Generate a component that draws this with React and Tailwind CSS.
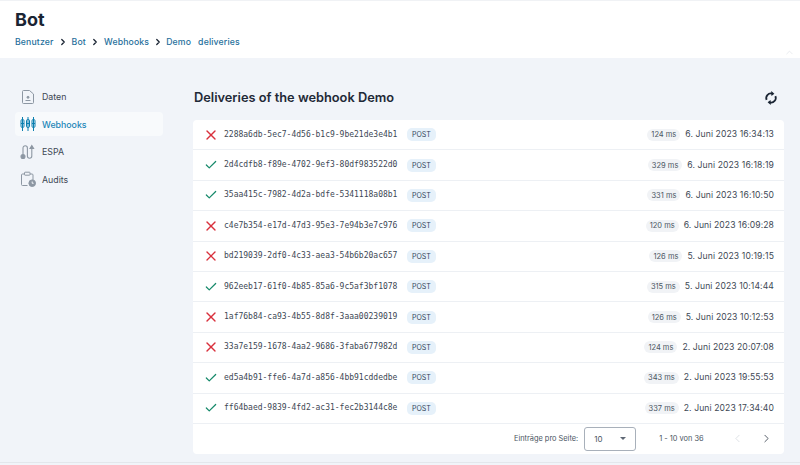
import { Check, ChevronLeft, ChevronRight, ChevronUp, X } from 'lucide-react'

const DELIVERIES = [
  { id: '2288a6db-5ec7-4d56-b1c9-9be21de3e4b1', ok: false, ms: 124, date: '6. Juni 2023 16:34:13' },
  { id: '2d4cdfb8-f89e-4702-9ef3-80df983522d0', ok: true, ms: 329, date: '6. Juni 2023 16:18:19' },
  { id: '35aa415c-7982-4d2a-bdfe-5341118a08b1', ok: true, ms: 331, date: '6. Juni 2023 16:10:50' },
  { id: 'c4e7b354-e17d-47d3-95e3-7e94b3e7c976', ok: false, ms: 120, date: '6. Juni 2023 16:09:28' },
  { id: 'bd219039-2df0-4c33-aea3-54b6b20ac657', ok: false, ms: 126, date: '5. Juni 2023 10:19:15' },
  { id: '962eeb17-61f0-4b85-85a6-9c5af3bf1078', ok: true, ms: 315, date: '5. Juni 2023 10:14:44' },
  { id: '1af76b84-ca93-4b55-8d8f-3aaa00239019', ok: false, ms: 126, date: '5. Juni 2023 10:12:53' },
  { id: '33a7e159-1678-4aa2-9686-3faba677982d', ok: false, ms: 124, date: '2. Juni 2023 20:07:08' },
  { id: 'ed5a4b91-ffe6-4a7d-a856-4bb91cddedbe', ok: true, ms: 343, date: '2. Juni 2023 19:55:53' },
  { id: 'ff64baed-9839-4fd2-ac31-fec2b3144c8e', ok: true, ms: 337, date: '2. Juni 2023 17:34:40' },
]

function DatenIcon() {
  return (
    <svg width="16" height="16" viewBox="0 0 16 16" fill="none" stroke="#8d97a3" strokeWidth="1">
      <path d="M2.5 2.5a1 1 0 0 1 1-1h6L13.5 5v8.5a1 1 0 0 1-1 1h-9a1 1 0 0 1-1-1z" />
      <circle cx="8" cy="8.3" r="1" fill="#8d97a3" />
      <path d="M5.5 11.5h5" />
    </svg>
  )
}

function WebhooksIcon() {
  return (
    <svg width="16" height="16" viewBox="0 0 16 16" fill="none" stroke="#0b7fb0" strokeWidth="1">
      <path d="M2.5 1v14M8 1v14M13.5 1v14" />
      <rect x="1" y="3.5" width="3" height="8" rx="1.3" />
      <rect x="6.5" y="3.5" width="3" height="8" rx="1.3" />
      <rect x="12" y="3.5" width="3" height="8" rx="1.3" />
      <path d="M1 7.5h3M6.5 7.5h3M12 7.5h3" />
    </svg>
  )
}

function EspaIcon() {
  return (
    <svg width="16" height="16" viewBox="0 0 16 16" fill="none" stroke="#8d97a3" strokeWidth="1.1">
      <path d="M3 10V4a2.2 2.2 0 0 1 4.4 0v8a2.2 2.2 0 0 0 4.4 0V3" />
      <path d="M10 4.5 11.8 1.5l1.8 3z" fill="#8d97a3" />
      <circle cx="3" cy="12.5" r="2" fill="#8d97a3" />
    </svg>
  )
}

function AuditsIcon() {
  return (
    <svg width="16" height="16" viewBox="0 0 16 16" fill="none" stroke="#8d97a3" strokeWidth="1">
      <path d="M7.5 14.5h-5a1 1 0 0 1-1-1V4a1 1 0 0 1 1-1h9.5a1 1 0 0 1 1 1v5" />
      <rect x="4.5" y="1.2" width="5.5" height="3" rx="0.6" fill="#f1f4f9" />
      <circle cx="12.2" cy="12.2" r="3.3" fill="#8d97a3" />
      <path d="M12.2 10.5v1.8h1.4" stroke="#f1f4f9" />
    </svg>
  )
}

const NAV = [
  { label: 'Daten', Icon: DatenIcon },
  { label: 'Webhooks', Icon: WebhooksIcon, active: true },
  { label: 'ESPA', Icon: EspaIcon },
  { label: 'Audits', Icon: AuditsIcon },
]

function RefreshIcon() {
  return (
    <svg width="14" height="14" viewBox="0 0 14 14" fill="none" stroke="#1a2433" strokeWidth="1.8">
      <path d="M2.6 8.8A4.6 4.6 0 0 1 8 2.6" />
      <path d="M11.4 5.2A4.6 4.6 0 0 1 6 11.4" />
      <path d="M7.2 0 10.4 2.7 7.4 5z" fill="#1a2433" stroke="none" />
      <path d="M6.8 14 3.6 11.3 6.6 9z" fill="#1a2433" stroke="none" />
    </svg>
  )
}

function Row({ item }) {
  return (
    <div className="flex h-[30.4px] shrink-0 items-center border-b border-[#edf0f4] pr-[10px] pl-[4px]">
      <span className="flex w-[27px] shrink-0 justify-center">
        {item.ok ? (
          <Check size={14} strokeWidth={2.1} className="text-[#16896a]" />
        ) : (
          <X size={16} strokeWidth={2} className="text-[#d9303c]" />
        )}
      </span>
      <span className="w-[172px] font-['DejaVu_Sans_Mono'] text-[8px] whitespace-nowrap text-[#3d4754]">{item.id}</span>
      <span className="ml-[11px] rounded-[5px] bg-[#e6f1fa] px-[5px] py-[1px] text-[7px] leading-[11px] text-[#34465a]">
        POST
      </span>
      <span className="ml-auto rounded-[6px] bg-[#f1f3f6] px-[4px] py-[0.5px] text-[7.5px] leading-[11px] text-[#4a5562]">
        {item.ms} ms
      </span>
      <span className="ml-[5px] text-[8.6px] tracking-[0.1px] text-[#3d4754]">{item.date}</span>
    </div>
  )
}

export default function App() {
  return (
    <div className="flex h-[465px] w-[800px] flex-col overflow-hidden bg-[#f1f4f9] font-['Inter',sans-serif]">
      <header className="relative h-[58px] shrink-0 border-t border-[#f0f2f5] bg-white pt-[9px] pl-[15px]">
        <h1 className="text-[18px] leading-[20px] font-bold text-[#1a2433]">Bot</h1>
        <nav className="mt-[6px] flex items-center text-[8.7px] leading-[12px] font-medium tracking-[0.15px] text-[#1f6f9c]">
          <span>Benutzer</span>
          <ChevronRight size={10} strokeWidth={3} className="mx-[4px] text-[#1a2433]" />
          <span>Bot</span>
          <ChevronRight size={10} strokeWidth={3} className="mx-[4px] text-[#1a2433]" />
          <span>Webhooks</span>
          <ChevronRight size={10} strokeWidth={3} className="mx-[3.5px] text-[#1a2433]" />
          <span>Demo</span>
          <span className="ml-[7px]">deliveries</span>
        </nav>
        <ChevronUp size={11} strokeWidth={1.5} className="absolute right-[5px] bottom-[0px] text-[#dfe3e8]" />
      </header>

      <div className="flex min-h-0 flex-1 pr-[16px]">
        <aside className="w-[193px] shrink-0 pt-[27px] pl-[15px]">
          <ul className="flex w-[148px] flex-col gap-[3.4px]">
            {NAV.map(({ label, Icon, active }) => (
              <li
                key={label}
                className={`flex h-[24px] items-center gap-[6px] rounded-[4px] pl-[5px] text-[8.8px] ${
                  active ? 'bg-[#f8fafc] font-medium text-[#1c86b8]' : 'text-[#3d4754]'
                }`}
              >
                <Icon />
                {label}
              </li>
            ))}
          </ul>
        </aside>

        <main className="flex min-w-0 flex-1 flex-col">
          <div className="flex h-[62px] shrink-0 items-center justify-between pt-[18px] pr-[6px] pl-[1px]">
            <h2 className="text-[12.8px] font-semibold text-[#1f2937]">Deliveries of the webhook Demo</h2>
            <RefreshIcon />
          </div>
          <section className="flex h-[334px] flex-col rounded-[4px] bg-white">
            {DELIVERIES.map((item) => (
              <Row key={item.id} item={item} />
            ))}
            <div className="flex flex-1 items-center text-[7.4px] text-[#4a5562]">
              <span className="ml-[321px]">Einträge pro Seite:</span>
              <span className="ml-[6px] flex h-[24px] w-[52px] items-center justify-between rounded-[3px] border border-[#a8b0ba] pr-[9px] pl-[9px] text-[8px]">
                10
                <span className="h-0 w-0 border-x-[3px] border-t-[3px] border-x-transparent border-t-[#5f6875]" />
              </span>
              <span className="ml-[23px]">1 - 10 von 36</span>
              <ChevronLeft size={13} strokeWidth={1.6} className="ml-[27px] text-[#d9dde2]" />
              <ChevronRight size={13} strokeWidth={1.6} className="ml-[16px] text-[#3d4754]" />
            </div>
          </section>
        </main>
      </div>
      <div className="h-[3px] shrink-0 border-t border-[#e3e7ec] bg-[#f1f4f9]" />
    </div>
  )
}
